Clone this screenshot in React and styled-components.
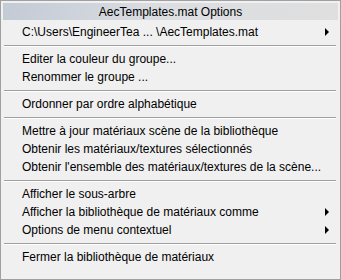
import React from "react";
import styled, { createGlobalStyle } from "styled-components";

const Global = createGlobalStyle`
  html, body { margin: 0; padding: 0; background: #f0f0f0; }
  body { font-family: "Liberation Sans", Arial, sans-serif; }
`;

const Menu = styled.div`
  box-sizing: border-box;
  width: 341px;
  height: 280px;
  border: 1px solid #a0a0a0;
  background: #f0f0f0;
  padding: 2px;
  display: flex;
  flex-direction: column;
  font-family: "Liberation Sans", Arial, sans-serif;
  font-size: 12px;
  color: #000;
`;

const Title = styled.div`
  height: 17px;
  display: flex;
  align-items: center;
  justify-content: center;
  background: linear-gradient(to right, #c3cbd6, #dcdee2 50%, #dfdfdf);
  color: #000;
  margin-bottom: 3px;
`;

const Item = styled.div`
  height: 18px;
  display: flex;
  align-items: center;
  padding-left: 19px;
  padding-right: 9px;
  white-space: nowrap;
`;

const Label = styled.span`
  flex: 1;
`;

const Arrow = styled.span`
  width: 0;
  height: 0;
  border-top: 4px solid transparent;
  border-bottom: 4px solid transparent;
  border-left: 4px solid #000;
`;

const Separator = styled.div`
  height: 9px;
  display: flex;
  align-items: center;
  padding: 0 2px 0 1px;
  &::before {
    content: "";
    flex: 1;
    height: 1px;
    background: #a0a0a0;
    box-shadow: 0 1px 0 #ffffff;
  }
`;

const groups = [
  [{ t: "C:\\Users\\EngineerTea ... \\AecTemplates.mat", sub: true }],
  [{ t: "Editer la couleur du groupe..." }, { t: "Renommer le groupe ..." }],
  [{ t: "Ordonner par ordre alphabétique" }],
  [
    { t: "Mettre à jour matériaux scène de la bibliothèque" },
    { t: "Obtenir les matériaux/textures sélectionnés" },
    { t: "Obtenir l'ensemble des matériaux/textures de la scène..." },
  ],
  [
    { t: "Afficher le sous-arbre" },
    { t: "Afficher la bibliothèque de matériaux comme", sub: true },
    { t: "Options de menu contextuel", sub: true },
  ],
  [{ t: "Fermer la bibliothèque de matériaux" }],
];

export default function App() {
  return (
    <>
      <Global />
      <Menu>
        <Title>AecTemplates.mat Options</Title>
        {groups.map((g, gi) => (
          <React.Fragment key={gi}>
            {gi > 0 && <Separator />}
            {g.map((it) => (
              <Item key={it.t}>
                <Label>{it.t}</Label>
                {it.sub && <Arrow />}
              </Item>
            ))}
          </React.Fragment>
        ))}
      </Menu>
    </>
  );
}
